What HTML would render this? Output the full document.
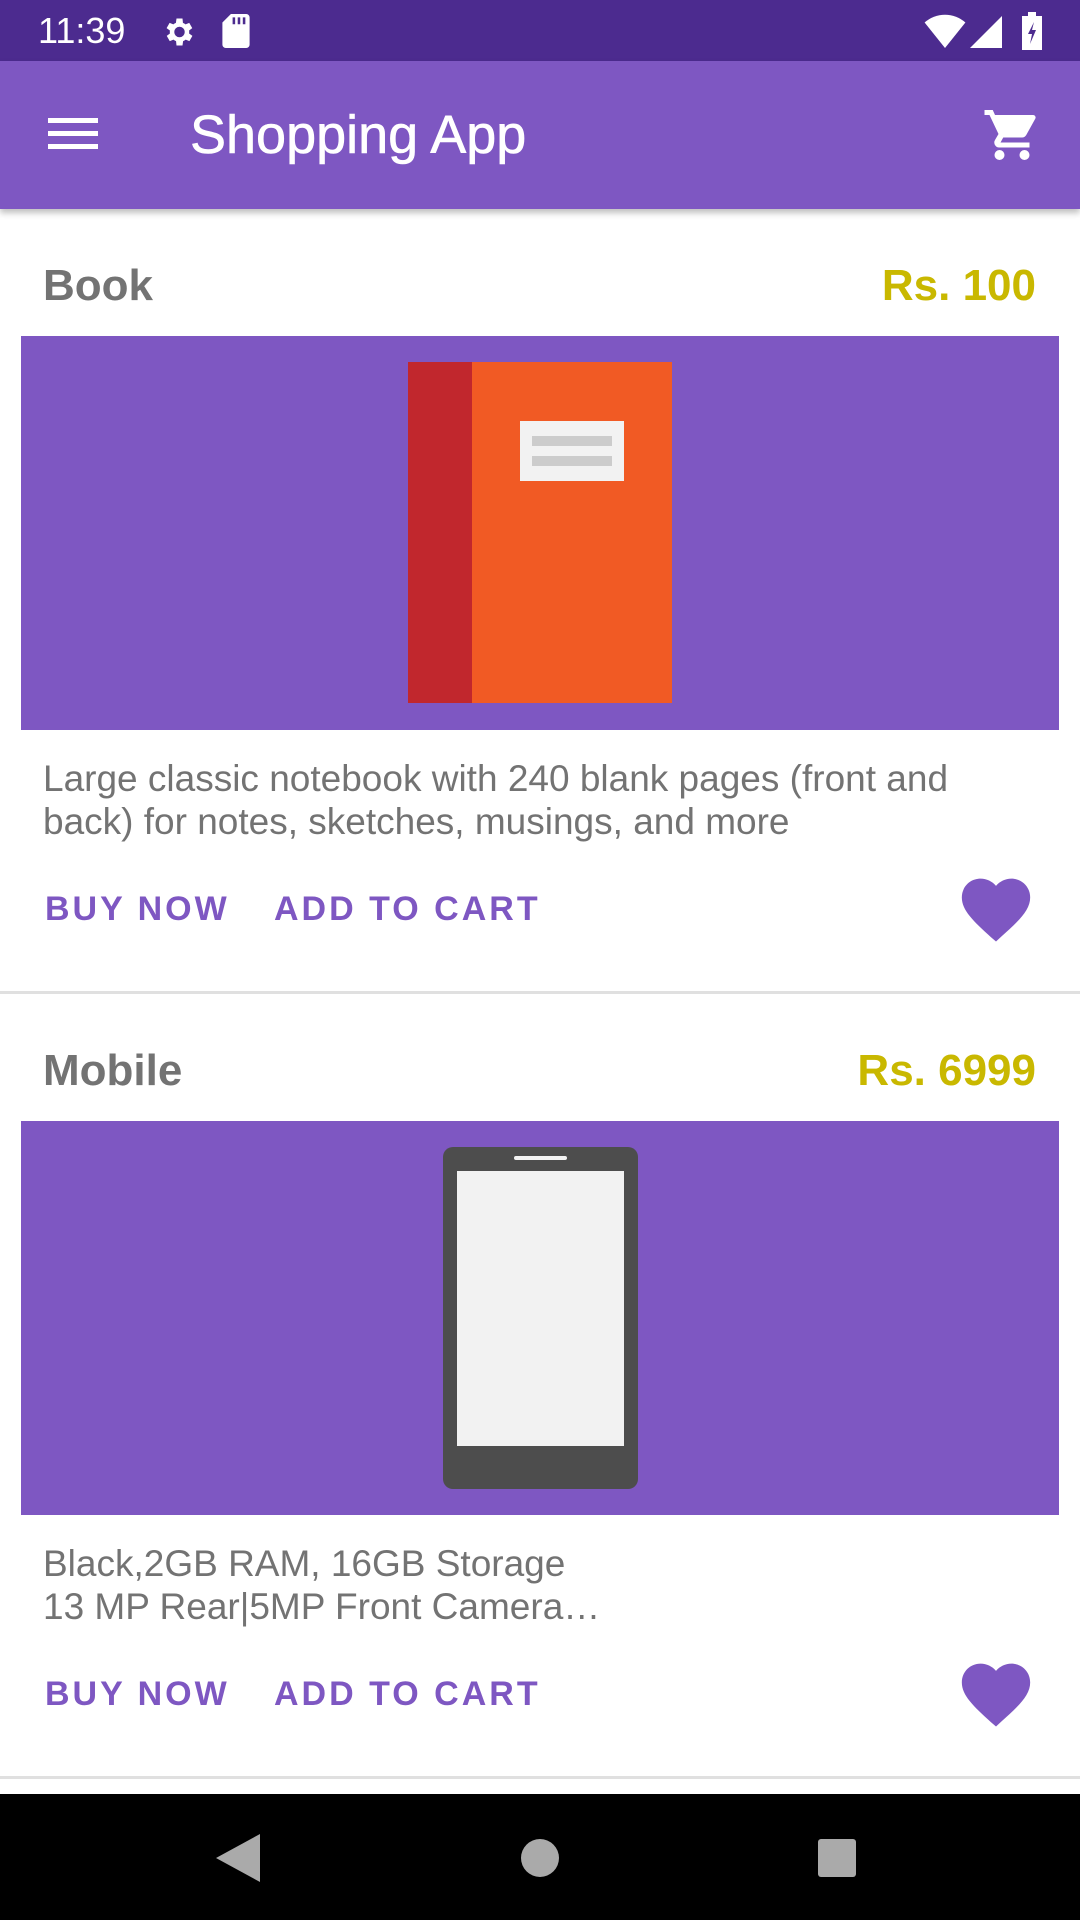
<!DOCTYPE html>
<html><head><meta charset="utf-8"><style>
*{margin:0;padding:0;box-sizing:border-box}
body{width:1080px;height:1920px;position:relative;overflow:hidden;background:#fff;font-family:"Liberation Sans",sans-serif}
.abs{position:absolute}
.sb{left:0;top:0;width:1080px;height:61px;background:#4c2b8f;color:#fff;font-size:36px}
.tb{left:0;top:61px;width:1080px;height:148px;background:#7e57c2;box-shadow:0 4px 6px rgba(0,0,0,.25)}
.title{color:#737373;font-weight:bold;font-size:44px}
.price{color:#c9b800;font-weight:bold;font-size:44px;right:44px}
.img{left:21px;width:1038px;height:394px;background:#7e57c2}
.desc{left:43px;color:#737373;font-size:37px;line-height:43px}
.btn{color:#7e57c2;font-size:34px;font-weight:bold;letter-spacing:3px}
.div{left:0;width:1080px;height:3px;background:#e0e0e0}
</style></head><body>
<div class="abs sb">
 <div class="abs" style="left:38px;top:10px;">11:39</div>
 <svg class="abs" style="left:160px;top:14px" width="36" height="36" viewBox="0 0 24 24"><path fill="#fff" d="M19.4 13a7.5 7.5 0 000-2l2.1-1.6-2-3.5-2.5 1a7 7 0 00-1.7-1L15 3h-4l-.4 2.9a7 7 0 00-1.7 1l-2.5-1-2 3.5L6.6 11a7.5 7.5 0 000 2l-2.1 1.6 2 3.5 2.5-1a7 7 0 001.7 1L11 21h4l.4-2.9a7 7 0 001.7-1l2.5 1 2-3.5zM13 15.5A3.5 3.5 0 1113 8.5a3.5 3.5 0 010 7z"/></svg>
 <svg class="abs" style="left:222px;top:14px" width="28" height="34" viewBox="0 0 16 20"><path fill="#fff" d="M5 0h9a2 2 0 012 2v16a2 2 0 01-2 2H2a2 2 0 01-2-2V5zM6 2v4h1.5V2zm3 0v4h1.5V2zm3 0v4h1.5V2z"/></svg>
 <svg class="abs" style="left:924px;top:14px" width="42" height="34" viewBox="0 0 24 20"><path fill="#fff" d="M12 20L0 5a18 18 0 0124 0z"/></svg>
 <svg class="abs" style="left:970px;top:16px" width="32" height="32" viewBox="0 0 20 20"><path fill="#fff" d="M20 0v20H0z"/></svg>
 <svg class="abs" style="left:1022px;top:12px" width="20" height="38" viewBox="0 0 10 19"><path fill="#fff" d="M3 0h4v2h3v17H0V2h3z"/><path fill="#4c2b8f" d="M6 5L3 11h2l-1 5 3-7H5z"/></svg>
</div>
<div class="abs tb">
 <div class="abs" style="left:48px;top:57px;width:50px;height:5px;background:#fff;box-shadow:0 13px 0 #fff,0 26px 0 #fff"></div>
 <div class="abs" style="left:190px;top:43px;color:#fff;font-size:54px;-webkit-text-stroke:0.6px #fff">Shopping App</div>
 <svg class="abs" style="left:982px;top:44px" width="60" height="60" viewBox="0 0 24 24"><path fill="#fff" d="M7 18a2 2 0 100 4 2 2 0 000-4zM1 2v2h2l3.6 7.6-1.4 2.4A2 2 0 007 17h12v-2H7.4l1.1-2h7.5a2 2 0 001.7-1l3.6-6.5A1 1 0 0020.4 4H5.2l-.9-2zm16 16a2 2 0 100 4 2 2 0 000-4z"/></svg>
</div>

<div class="abs title" style="left:43px;top:261px">Book</div>
<div class="abs price" style="top:261px">Rs. 100</div>
<div class="abs img" style="top:336px">
 <div class="abs" style="left:387px;top:26px;width:64px;height:341px;background:#c1272d"></div>
 <div class="abs" style="left:451px;top:26px;width:200px;height:341px;background:#f15a24"></div>
 <div class="abs" style="left:499px;top:85px;width:104px;height:60px;background:#f2f2f2"></div>
 <div class="abs" style="left:511px;top:100px;width:80px;height:10px;background:#ccc"></div>
 <div class="abs" style="left:511px;top:120px;width:80px;height:10px;background:#ccc"></div>
</div>
<div class="abs desc" style="top:757px">Large classic notebook with 240 blank pages (front and<br>back) for notes, sketches, musings, and more</div>
<div class="abs btn" style="left:45px;top:890px">BUY NOW</div>
<div class="abs btn" style="left:274px;top:890px">ADD TO CART</div>
<svg class="abs" style="left:955px;top:868px" width="82" height="76" viewBox="0 0 24 22"><path fill="#7e57c2" d="M12 21.4l-1.5-1.3C5.4 15.4 2 12.3 2 8.5 2 5.4 4.4 3 7.5 3c1.7 0 3.4.8 4.5 2.1C13.1 3.8 14.8 3 16.5 3 19.6 3 22 5.4 22 8.5c0 3.8-3.4 6.9-8.5 11.5z"/></svg>
<div class="abs div" style="top:991px"></div>

<div class="abs title" style="left:43px;top:1046px">Mobile</div>
<div class="abs price" style="top:1046px">Rs. 6999</div>
<div class="abs img" style="top:1121px">
 <div class="abs" style="left:422px;top:26px;width:195px;height:342px;background:#4d4d4d;border-radius:10px"></div>
 <div class="abs" style="left:436px;top:50px;width:167px;height:275px;background:#f2f2f2"></div>
 <div class="abs" style="left:493px;top:35px;width:53px;height:4px;background:#f2f2f2;border-radius:2px"></div>
</div>
<div class="abs desc" style="top:1542px">Black,2GB RAM, 16GB Storage<br>13 MP Rear|5MP Front Camera…</div>
<div class="abs btn" style="left:45px;top:1675px">BUY NOW</div>
<div class="abs btn" style="left:274px;top:1675px">ADD TO CART</div>
<svg class="abs" style="left:955px;top:1653px" width="82" height="76" viewBox="0 0 24 22"><path fill="#7e57c2" d="M12 21.4l-1.5-1.3C5.4 15.4 2 12.3 2 8.5 2 5.4 4.4 3 7.5 3c1.7 0 3.4.8 4.5 2.1C13.1 3.8 14.8 3 16.5 3 19.6 3 22 5.4 22 8.5c0 3.8-3.4 6.9-8.5 11.5z"/></svg>
<div class="abs div" style="top:1776px"></div>

<div class="abs" style="left:0;top:1794px;width:1080px;height:126px;background:#000">
 <svg class="abs" style="left:216px;top:40px" width="44" height="48" viewBox="0 0 22 24"><path fill="#aaa" d="M22 0v24L0 12z"/></svg>
 <div class="abs" style="left:521px;top:45px;width:38px;height:38px;border-radius:50%;background:#aaa"></div>
 <div class="abs" style="left:818px;top:45px;width:38px;height:38px;border-radius:3px;background:#aaa"></div>
</div>
</body></html>
